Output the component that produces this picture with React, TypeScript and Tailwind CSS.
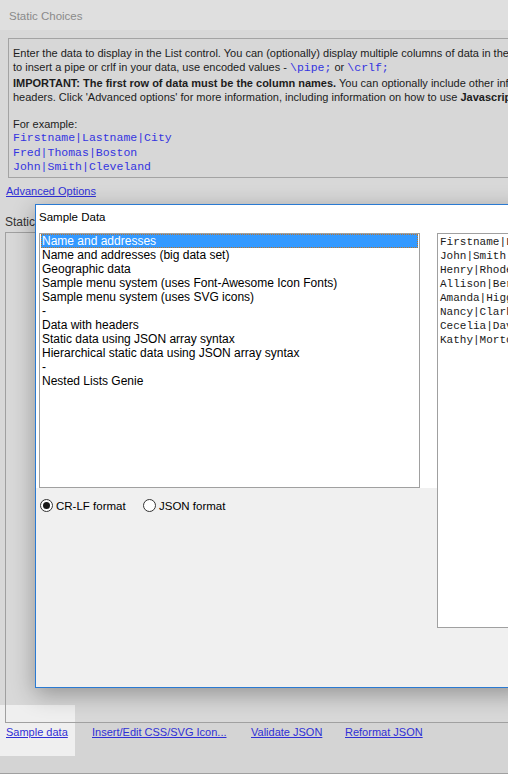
import React from 'react';

const sampleSets = [
    'Name and addresses',
    'Name and addresses (big data set)',
    'Geographic data',
    'Sample menu system (uses Font-Awesome Icon Fonts)',
    'Sample menu system (uses SVG icons)',
    '-',
    'Data with headers',
    'Static data using JSON array syntax',
    'Hierarchical static data using JSON array syntax',
    '-',
    'Nested Lists Genie',
];

const previewRows = [
    'Firstname|Lastname|City',
    'John|Smith|Boston',
    'Henry|Rhodes|Cleveland',
    'Allison|Berry|Chicago',
    'Amanda|Higgins|Denver',
    'Nancy|Clarke|Seattle',
    'Cecelia|Davis|Austin',
    'Kathy|Morton|Miami',
];

const Radio: React.FC<{ checked?: boolean; label: string; className?: string }> = ({ checked, label, className }) => (
    <div className={`flex items-center gap-[3px] ${className ?? ''}`}>
        <span className="w-[13px] h-[13px] rounded-full border border-[#333] bg-white flex items-center justify-center">
            {checked && <span className="w-[7px] h-[7px] rounded-full bg-[#1a1a1a]" />}
        </span>
        <span className="text-[11.5px] leading-[14px] text-black">{label}</span>
    </div>
);

const App: React.FC = () => {
    return (
        <div className="relative w-[508px] h-[774px] overflow-hidden bg-[#d8d8d8] border-b border-[#a0a0a0] font-['Liberation_Sans',Arial,sans-serif] text-[11px] whitespace-nowrap">
            {/* window title */}
            <div className="h-[30px] bg-[#dfdfdf] pl-[9px] pt-[8px] text-[11.5px] leading-[16px] text-[#8a8a8a]">Static Choices</div>

            {/* help box */}
            <div className="pt-[8px] pl-[8px]">
                <div className="h-[140px] border-y border-l border-[#a3a3a3] bg-[#d7d7d7] pl-[4px] pt-[7px] leading-[14px] text-[#1c1c1c] overflow-hidden">
                    <div>Enter the data to display in the List control. You can (optionally) display multiple columns of data in the List control by separating columns with a pipe.</div>
                    <div>
                        to insert a pipe or crlf in your data, use encoded values -{' '}
                        <span className="font-['Liberation_Mono',monospace] text-[11.5px] text-[#3434e0]">\pipe;</span> or{' '}
                        <span className="font-['Liberation_Mono',monospace] text-[11.5px] text-[#3434e0]">\crlf;</span>
                    </div>
                    <div className="mt-[1px]">
                        <b>IMPORTANT: The first row of data must be the column names.</b> You can optionally include other information in the column
                    </div>
                    <div>
                        headers. Click 'Advanced options' for more information, including information on how to use <b>Javascript</b> functions.
                    </div>
                    <div className="mt-[13px]">For example:</div>
                    <div className="font-['Liberation_Mono',monospace] text-[11.5px] leading-[14.5px] text-[#3434e0]">
                        <div>Firstname|Lastname|City</div>
                        <div>Fred|Thomas|Boston</div>
                        <div>John|Smith|Cleveland</div>
                    </div>
                </div>
            </div>

            <div className="mt-[6px] pl-[6px] leading-[14px]">
                <span className="text-[#2f2fd6] underline">Advanced Options</span>
            </div>

            <div className="mt-[17px] pl-[5px] text-[12px] leading-[14px] text-[#333]">Static</div>

            {/* hover highlight under the first footer link */}
            <div className="absolute left-0 top-[705px] w-[75px] h-[51px] bg-[#efefef] z-[1]" />

            <div className="relative z-[2] mt-[3px] ml-[5px] h-[491px] border-y border-l border-[#a0a0a0]" />

            <div className="h-[50px] bg-[#d4d4d4] pl-[6px] pt-[2px]">
                <div className="relative z-[2] flex leading-[14px] text-[#2f2fd6]">
                    <span className="w-[86px]"><span className="underline">Sample data</span></span>
                    <span className="w-[159px]"><span className="underline">Insert/Edit CSS/SVG Icon...</span></span>
                    <span className="w-[94px]"><span className="underline">Validate JSON</span></span>
                    <span className="underline">Reformat JSON</span>
                </div>
            </div>

            {/* Sample Data dialog */}
            <div className="absolute left-[35px] top-[204px] w-[490px] h-[484px] z-[3] flex flex-col border border-[#2a7ad2] bg-[#f0f0f0] shadow-[0_6px_22px_rgba(0,0,0,0.32)]">
                <div className="h-[28px] bg-white pl-[3px] pt-[5px] text-[11.5px] leading-[14px] text-black">Sample Data</div>
                <div className="flex">
                    <div className="w-[401px] shrink-0">
                        <div className="h-[255px] bg-white">
                            <div className="ml-[3px] w-[381px] h-[255px] border border-[#a0a0a0] bg-white text-[12px] leading-[14px] text-black overflow-hidden">
                                {sampleSets.map((item, i) => (
                                    <div
                                        key={i}
                                        className={
                                            i === 0
                                                ? 'mx-[1px] h-[14px] border border-dotted border-[#b8742c] bg-[#3399ff] text-white leading-[12px]'
                                                : 'mx-[1px] h-[14px] border border-transparent leading-[12px]'
                                        }
                                    >
                                        {item}
                                    </div>
                                ))}
                            </div>
                        </div>
                        <div className="mt-[11px] h-[13px] pl-[4px] flex items-center">
                            <Radio checked label="CR-LF format" className="w-[103px]" />
                            <Radio label="JSON format" />
                        </div>
                    </div>
                    <div className="flex-1 h-[395px] border-y border-l border-[#a0a0a0] bg-white pl-[2px] pt-[1px] font-['Liberation_Mono',monospace] text-[11px] leading-[14px] text-[#1a1a1a] overflow-hidden">
                        {previewRows.map((row) => (
                            <div key={row}>{row}</div>
                        ))}
                    </div>
                </div>
            </div>
        </div>
    );
};

export default App;
